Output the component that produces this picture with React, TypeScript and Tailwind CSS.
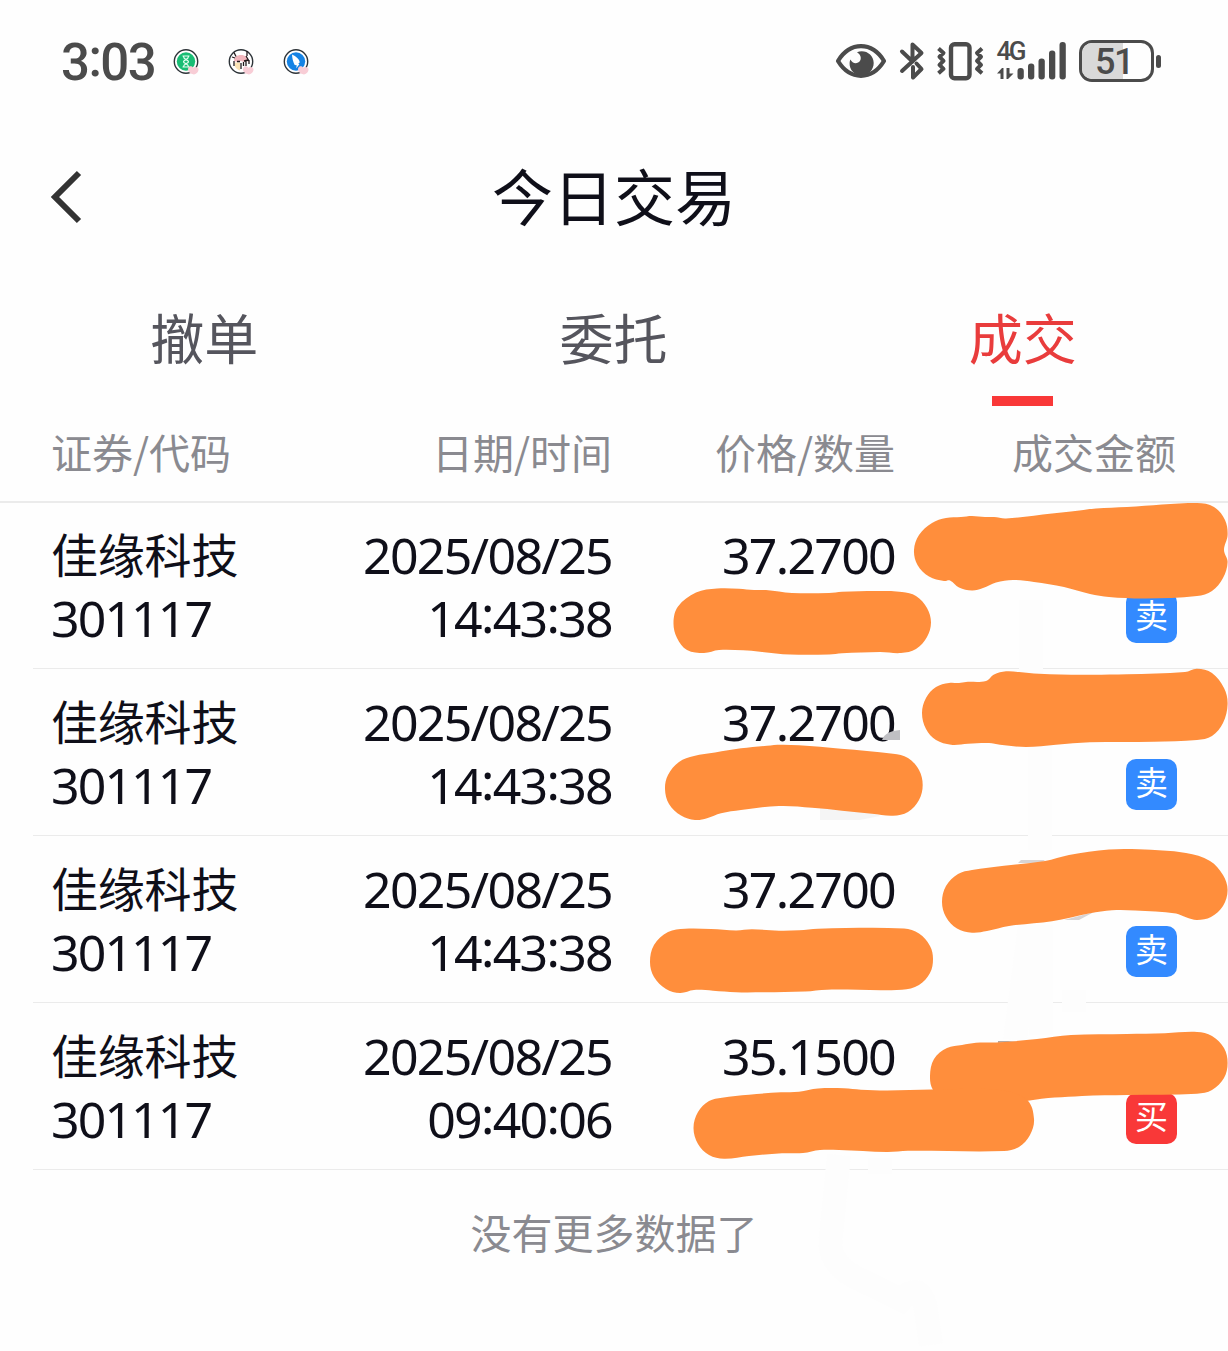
import type { ReactNode } from 'react';

type Point = [number, number];

interface Trade {
  name: string;
  code: string;
  date: string;
  time: string;
  price: string;
  side: 'buy' | 'sell';
}

const TABS = ['撤单', '委托', '成交'];
const ACTIVE_TAB = '成交';

const TRADES: Trade[] = [
  { name: '佳缘科技', code: '301117', date: '2025/08/25', time: '14:43:38', price: '37.2700', side: 'sell' },
  { name: '佳缘科技', code: '301117', date: '2025/08/25', time: '14:43:38', price: '37.2700', side: 'sell' },
  { name: '佳缘科技', code: '301117', date: '2025/08/25', time: '14:43:38', price: '37.2700', side: 'sell' },
  { name: '佳缘科技', code: '301117', date: '2025/08/25', time: '09:40:06', price: '35.1500', side: 'buy' },
];

// Outlines of the marker strokes that hide amounts and quantities
const MARKS: Point[][] = [
  [[914, 550], [919, 535], [932, 523], [946, 518], [961, 517], [972, 516], [985, 517], [994, 517], [1006, 518.5], [1052, 513.5], [1071, 511.5], [1096, 508.5], [1127, 507], [1197, 503], [1214, 507], [1225, 520], [1227.6, 535], [1224, 550], [1227.6, 562], [1223, 578], [1212, 591], [1197, 596], [1146, 598.5], [1109, 597], [1090, 594], [1064, 587], [1034, 582], [1013, 580], [996, 582.5], [983, 588], [972, 590.5], [959, 587.5], [950, 580.5], [944, 581], [929, 576.5], [917.5, 565]],
  [[673.5, 622.5], [678, 606.5], [696, 592.5], [717, 588.5], [739, 588.7], [754, 590], [766, 590], [792, 593], [829, 593], [842, 591.7], [880, 591], [902, 592], [916, 596], [927, 608], [931, 622.5], [927, 637], [916, 649], [901, 653], [880, 652], [842, 653.3], [829, 654.5], [790, 654.5], [760, 651.7], [743, 650.3], [719, 650], [704, 653], [687, 650], [677, 638]],
  [[922, 713], [926, 698], [936, 687], [949, 683], [959, 683], [966, 682], [986, 681], [994, 674.5], [1006, 671.3], [1019, 672], [1039, 673.7], [1082, 674.7], [1127, 674.3], [1185, 672], [1197, 668.7], [1212, 673], [1224, 688], [1227.6, 704], [1223, 723], [1212, 736], [1197, 740], [1154, 741.7], [1090, 742.3], [1056, 744.7], [1026, 747], [1000, 744.7], [989, 743], [968, 743.7], [951, 744.7], [936, 740], [926, 729]],
  [[665, 789], [668, 775], [679, 762], [694, 756], [715, 752.5], [741, 748.3], [767, 745.7], [781, 744.7], [799, 745.3], [841, 748.7], [893, 753.7], [908, 758], [919, 770], [922.7, 785], [919, 800], [908, 812], [893, 815.7], [872, 813.7], [812, 807.7], [779, 806], [741, 810], [721, 813.3], [707, 818.3], [695, 820], [681, 815.5], [669, 804]],
  [[942, 902], [946, 886], [958, 874], [972, 870], [1004, 865.7], [1045, 861], [1069, 855], [1109, 849.5], [1139, 849.3], [1186, 853], [1210, 861], [1223, 875], [1227.6, 890], [1223, 906], [1211, 917], [1197, 920], [1186, 917.3], [1176, 913.5], [1135, 910.5], [1112, 910.3], [1090, 913.3], [1052, 921.3], [1009, 926], [987, 931], [972, 932.7], [957, 928.5], [946, 917]],
  [[650, 962], [654, 945], [668, 932], [685, 928.7], [711, 929], [736, 930.5], [752, 929.3], [779, 930.7], [799, 930.3], [818, 928.7], [904, 928.5], [919, 933.5], [930, 946], [933, 959], [930, 973], [919, 985], [902, 989.7], [827, 989.7], [805, 991.5], [764, 992.3], [736, 992.3], [713, 990.7], [694, 990], [680, 993], [666, 989], [654, 977]],
  [[930, 1076], [934, 1059], [947, 1048], [962, 1045], [976, 1042.7], [1000, 1042.3], [1037, 1039], [1071, 1035], [1127, 1034], [1165, 1033.3], [1197, 1032], [1212, 1036], [1224, 1048], [1227.6, 1063], [1224, 1078], [1212, 1090], [1197, 1093.7], [1127, 1095], [1082, 1096], [1028, 1100.7], [1000, 1110], [950, 1108], [933, 1090]],
  [[693.5, 1128], [698, 1112], [709, 1101], [722, 1097.7], [749, 1094.7], [781, 1092.3], [799, 1091.7], [818, 1088.5], [844, 1088.3], [861, 1089.7], [887, 1090.5], [932, 1089.5], [1000, 1090], [1027, 1100], [1034, 1119], [1030, 1135], [1019, 1147], [1004, 1151], [908, 1150.7], [887, 1152], [839, 1150], [820, 1150], [803, 1153], [782, 1153.3], [749, 1156], [724, 1158.7], [709, 1155], [698, 1144]],
];

// Closed Catmull-Rom curve through the points
function smoothPath(points: Point[]): string {
  const n = points.length;
  let d = `M${points[0][0]} ${points[0][1]}`;
  for (let i = 0; i < n; i++) {
    const p0 = points[(i - 1 + n) % n];
    const p1 = points[i];
    const p2 = points[(i + 1) % n];
    const p3 = points[(i + 2) % n];
    // keep the handles shorter than the segment they bend
    const len = Math.hypot(p2[0] - p1[0], p2[1] - p1[1]);
    const a = len / (Math.hypot(p2[0] - p0[0], p2[1] - p0[1]) * 2.9);
    const b = len / (Math.hypot(p3[0] - p1[0], p3[1] - p1[1]) * 2.9);
    d += `C${p1[0] + (p2[0] - p0[0]) * a} ${p1[1] + (p2[1] - p0[1]) * a} ${p2[0] - (p3[0] - p1[0]) * b} ${p2[1] - (p3[1] - p1[1]) * b} ${p2[0]} ${p2[1]}`;
  }
  return `${d}Z`;
}

function AppBadge({ color, children }: { color: string; children: ReactNode }) {
  return (
    <svg className="h-[30px] w-[30px]" viewBox="0 0 30 30">
      <circle cx="14" cy="14.5" r="11.7" fill="#fff" stroke="#2d3338" strokeWidth="1.4" />
      <circle cx="14" cy="14.5" r="9.2" fill={color} />
      {children}
      <path
        d="M22 27.500c-5-1-7-4-5.500-7 1.200-2.200 4-1.500 4.800.3 1.700-1.500 5-1 5.200 1.500.2 2.500-1.700 4.500-4.500 5.200z"
        fill="#f8cdd6"
      />
    </svg>
  );
}

function NotificationIcons() {
  return (
    <div className="mt-px flex gap-[25px]">
      <AppBadge color="#18bd74">
        <path
          d="M10.500 9h7M10.500 20h7M11.500 9.500c0 3 5 3.500 5 5.200s-5 2.300-5 5M16.500 9.500c0 3-5 3.500-5 5.200s5 2.300 5 5"
          fill="none"
          stroke="#e4fff2"
          strokeWidth="1.200"
        />
      </AppBadge>
      <AppBadge color="#fff">
        <path d="M7 14c0-4 3-6 7-6s7 2.500 8 7l-3-1-2 1-3-1-4 1z" fill="#f2b6bd" />
        <path d="M8 15.500h5v8c-2-.5-4-2-5-4z" fill="#fbe3b5" />
        <path
          d="M7 5.500l2 4M20 4v5M5 10l3 1M10 14.500h3M17 14l4-1M19 9l3 5M7 14v5M14 16v6M16.500 15v4M19 14v5M22 13v4"
          fill="none"
          stroke="#231a1c"
          strokeWidth="1.300"
        />
      </AppBadge>
      <AppBadge color="#1683e4">
        <path d="M10 7.500c4 2 7.500 4.500 7.800 8l-1.500.8 1 1-3 4 .4-3-2-.4C11 15 10.200 11 10 7.500z" fill="#fff" />
      </AppBadge>
    </div>
  );
}

function EyeIcon() {
  return (
    <svg className="h-9 w-[52px]" viewBox="0 0 52 36" fill="none">
      <path
        d="M3 18C8.500 9 16.500 3.200 26 3.200S43.500 9 49 18C43.500 27 35.500 32.800 26 32.800S8.500 27 3 18z"
        stroke="#4b4b4b"
        strokeWidth="4.200"
        strokeLinejoin="round"
      />
      <path
        d="M22 9.200c8-3.200 16.700 2.300 16.700 10.800 0 6.800-5.400 12.300-12.200 12.300S14.200 27 14.600 20c0-1.300.3-2.500.8-3.600 1.600 3.400 4.900 4.600 7.700 3.100 3.800-2 3.700-7.300-1.100-10.300z"
        fill="#4b4b4b"
      />
    </svg>
  );
}

function BluetoothIcon() {
  return (
    <svg className="ml-3 h-10 w-[26px]" viewBox="0 0 26 40" fill="none">
      <path
        d="M3 10.500L13.500 20.500V3.500l9 8.500L3 30M17.500 22.500l5 5.500-8.500 8.500V26"
        stroke="#4b4b4b"
        strokeWidth="4"
        strokeLinecap="round"
        strokeLinejoin="round"
      />
    </svg>
  );
}

function VibrateIcon() {
  return (
    <svg className="ml-[11px] h-10 w-12" viewBox="0 0 48 40" fill="none" stroke="#4b4b4b" strokeWidth="4">
      <rect x="15" y="3.200" width="18.500" height="34" rx="3.500" strokeWidth="4.400" />
      <path d="M2.500 7.500l5 4.500-4 3.800 4 4-4 4 4 4-5 4.500M46 7.500l-5 4.500 4 3.800-4 4 4 4-4 4 5 4.500" strokeLinejoin="round" />
    </svg>
  );
}

function SignalIcon() {
  return (
    <div className="relative ml-[13px] h-10 w-[70px]">
      <span className="absolute left-0 top-0 font-[Roboto] text-[26px] leading-5 font-medium tracking-[-2.6px]">4G</span>
      <svg className="h-10 w-[70px]" viewBox="0 0 70 40" fill="#4b4b4b">
        <path d="M0 32.500L5 27h1.500v11H3.500v-5.500zM9.500 27h3v5.500h4L11 38H9.500z" />
        <rect x="20.500" y="27" width="6.300" height="11.500" rx="3" />
        <rect x="31" y="22.500" width="6.300" height="16" rx="3" />
        <rect x="41.500" y="17.500" width="6.300" height="21" rx="3" />
        <rect x="52" y="9.500" width="6.300" height="29" rx="3" />
        <rect x="62.500" y="1" width="6.300" height="37.500" rx="3" />
      </svg>
    </div>
  );
}

function Battery({ level }: { level: number }) {
  return (
    <div className="ml-3 flex items-center gap-[2.5px]">
      <div className="relative flex h-[42px] w-[75px] items-center justify-center overflow-hidden rounded-[13px] border-[3px] border-[#4b4b4b]">
        <div className="absolute inset-y-0 left-0 bg-[#d9d9d9]" style={{ width: `${level + 9}%` }} />
        <span className="relative pt-0.5 pr-1 font-[Roboto] text-[36px] leading-9 font-medium tracking-[-1.5px]">{level}</span>
      </div>
      <div className="h-[13px] w-[5px] rounded-full bg-[#4b4b4b]" />
    </div>
  );
}

function StatusBar() {
  return (
    <div className="mb-[2px] flex h-[122px] items-center justify-between pr-[67px] pl-[61px] text-[#4b4b4b]">
      <div className="flex items-center">
        <span className="w-[111px] pt-1 font-[Roboto] text-[51px] leading-[60px] font-medium tracking-[-1.6px]">
          3<span className="align-[4px] leading-none">:</span>03
        </span>
        <NotificationIcons />
      </div>
      <div className="flex items-center">
        <EyeIcon />
        <BluetoothIcon />
        <VibrateIcon />
        <SignalIcon />
        <Battery level={51} />
      </div>
    </div>
  );
}

function TitleBar() {
  return (
    <div className="grid h-[145px] grid-cols-[1fr_auto_1fr] items-center px-[50px]">
      <svg className="h-[54px] w-8" viewBox="0 0 32 54" fill="none">
        <path d="M29 3L5 27l24 24" stroke="#333" strokeWidth="6" />
      </svg>
      <h1 className="-mt-1 text-[61px] leading-[80px]">今日交易</h1>
    </div>
  );
}

function Tabs() {
  return (
    <div className="grid h-[137px] grid-cols-3 text-[54px]">
      {TABS.map(tab => (
        <div
          key={tab}
          className={`-ml-px flex flex-col items-center pt-[28px] leading-[80px] ${
            tab === ACTIVE_TAB ? 'text-[#e93c3c]' : 'text-[#55555d]'
          }`}
        >
          {tab}
          {tab === ACTIVE_TAB && <div className="mt-[19px] h-[10px] w-[61px] bg-[#f93838]" />}
        </div>
      ))}
    </div>
  );
}

function TableHead() {
  return (
    <div className="grid h-[97px] grid-cols-[260px_300px_283px_281px] items-center border-b-2 border-[#ebebeb] px-[52px] pb-[5px] text-right text-[41px] leading-[60px] text-[#8a8a90]">
      <div className="-ml-px text-left">证券/代码</div>
      <div>日期/时间</div>
      <div>价格/数量</div>
      <div>成交金额</div>
    </div>
  );
}

function Time({ value }: { value: string }) {
  return (
    <>
      {value.split(':').map((part, i) => (
        <span key={i}>
          {i > 0 && <span className="align-[4px] leading-none">:</span>}
          {part}
        </span>
      ))}
    </>
  );
}

function TradeRow({ trade }: { trade: Trade }) {
  return (
    <div className="ml-[33px] grid h-[167px] grid-cols-[260px_300px_283px_282px] border-b border-[#ebebeb] pt-[22px] pl-[19px] text-right font-['Noto_Sans','Noto_Sans_CJK_SC',sans-serif] text-[50px] leading-[63px] tracking-[-1.7px]">
      <div className="text-left">
        <div className="-mt-[3px] mb-[3px] -ml-px h-[63px] font-['Noto_Sans_CJK_SC',sans-serif] text-[47px] tracking-[-0.2px]">
          {trade.name}
        </div>
        <div className="-ml-px h-[63px] tracking-[-1.9px]">{trade.code}</div>
      </div>
      <div>
        <div className="h-[63px]">{trade.date}</div>
        <div className="h-[63px]">
          <Time value={trade.time} />
        </div>
      </div>
      <div>{trade.price}</div>
      <div className="flex justify-end pt-[68px]">
        <div
          className={`h-[51px] w-[51px] rounded-[10px] text-center font-['Noto_Sans_CJK_SC',sans-serif] text-[33px] leading-[44px] tracking-normal text-white ${
            trade.side === 'sell' ? 'bg-[#338aff]' : 'bg-[#f93838]'
          }`}
        >
          {trade.side === 'sell' ? '卖' : '买'}
        </div>
      </div>
    </div>
  );
}

function MarkerLayer() {
  return (
    <svg className="pointer-events-none absolute top-0 left-0 h-[1351px] w-[1228px]" viewBox="0 0 1228 1351" fill="none">
      {/* eraser trails, only just darker than the page */}
      <g stroke="#fdfdfd" strokeWidth="24">
        <path d="M1031 600V680M1040 740V850M1030 925L1015 1040M1041 925V1035M1074 990v22M839 1155l-8 80q-5 30 30 45l40 20q20-20 25 10l5 35M880 1158v16" />
      </g>
      <path d="M882 740q3-9 18-10v10z" fill="#bfbfc3" />
      <path d="M820 808h46l14 8-20 4h-40z" fill="#f5f5f5" />
      <path d="M1018 863l3-3h24l-4 3zM1064 920l30-8-15 8z" fill="#d8d4d4" />
      <path d="M998 1041h20l-20 2z" fill="#b5a8a2" />
      <g fill="#ff8e3c">
        {MARKS.map((points, i) => (
          <path key={i} d={smoothPath(points)} />
        ))}
      </g>
    </svg>
  );
}

export default function App() {
  return (
    <div className="relative h-[1351px] w-[1228px] overflow-hidden bg-[#fefefe] font-['Noto_Sans_CJK_SC',sans-serif] text-[#0f0f19]">
      <StatusBar />
      <TitleBar />
      <Tabs />
      <TableHead />
      <div className="-mt-px">
        {TRADES.map((trade, i) => (
          <TradeRow key={i} trade={trade} />
        ))}
      </div>
      <p className="pt-[31px] text-center text-[41px] leading-[60px] text-[#8a8a90]">没有更多数据了</p>
      <MarkerLayer />
    </div>
  );
}
